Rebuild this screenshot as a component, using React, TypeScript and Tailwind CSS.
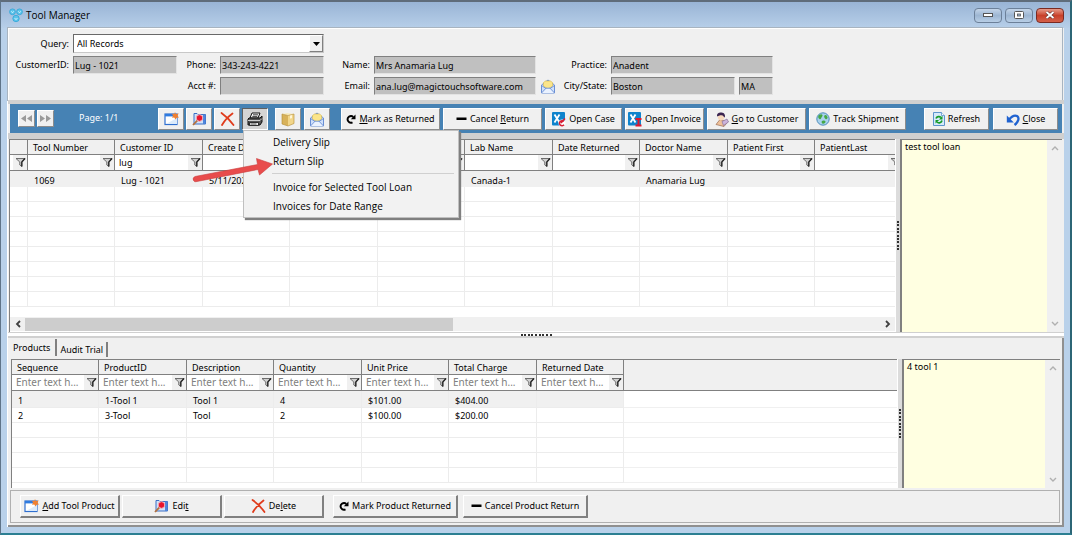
import React, { useState } from "react";

const fields = "h-[18px] w-full min-w-0 bg-[#c0c0c0] border border-t-[#808080] border-l-[#808080] border-r-[#e3e3e3] border-b-[#e3e3e3] pl-px outline-none";

const toolColumns = ["", "Tool Number", "Customer ID", "Create Date", "", "", "Lab Name", "Date Returned", "Doctor Name", "Patient First", "PatientLast"];
const toolRow = ["", "1069", "Lug - 1021", "5/11/2021", "", "", "Canada-1", "", "Anamaria Lug", "", ""];

const productColumns = ["Sequence", "ProductID", "Description", "Quantity", "Unit Price", "Total Charge", "Returned Date"];
const productRows = [
  ["1", "1-Tool 1", "Tool 1", "4", "$101.00", "$404.00", ""],
  ["2", "3-Tool", "Tool", "2", "$100.00", "$200.00", ""],
];

function FunnelIcon() {
  return (
    <svg width="11" height="11" viewBox="0 0 11 11">
      <path d="M1 1.5h9L6.8 5v4.500L4.800 8V5z" fill="#d0d0d0" stroke="#606060" strokeWidth=".9" />
      <path d="M10 1.5L6.8 5v4.500" fill="none" stroke="#222" strokeWidth="1.3" />
    </svg>
  );
}

function NewIcon() {
  return (
    <svg width="15" height="14" viewBox="0 0 15 14">
      <rect x="1" y="2" width="12" height="10.5" fill="#fff" stroke="#2f6fd0" strokeWidth="1.2" />
      <path d="M1 2h8v2.4H1z" fill="#2f7be0" />
      <path d="M2 12h11V6z" fill="#dcebfb" />
      <path d="M11 0l1 2.2 2.6-.9-1 2.4L15 5.5l-2.6.2-.8 1.9-1.4-2-2.2.2 1-2-1-2 2.3.3z" fill="#f08030" />
    </svg>
  );
}

function EditIcon() {
  return (
    <svg width="15" height="14" viewBox="0 0 15 14">
      <path d="M2 1.5h3l1 1h7.5v9.5H2z" fill="#cfe2fa" stroke="#3b6fc4" />
      <path d="M11 2.5h2.5V12H11z" fill="#4f86dc" />
      <circle cx="7.5" cy="6" r="3.3" fill="#e8142c" stroke="#f5b0b8" />
      <path d="M5.2 8.6L1 13" stroke="#b4703c" strokeWidth="1.8" />
    </svg>
  );
}

function DeleteIcon() {
  return (
    <svg width="15" height="14" viewBox="0 0 15 14">
      <path d="M1.5 1C5 3.5 10 8 13.5 13M12.5 1.5C8.5 4.5 4.5 8.5 2 13" fill="none" stroke="#e03c1c" strokeWidth="1.8" strokeLinecap="round" />
    </svg>
  );
}

function PrintIcon() {
  return (
    <svg width="18" height="15" viewBox="0 0 18 15">
      <path d="M6 1h8l-2 5H4z" fill="#fff" stroke="#111" />
      <path d="M7 2.8h5M6.3 4.4h5" stroke="#111" strokeWidth=".8" />
      <path d="M3 6h11l2-2v6l-2 3H2V7z" fill="#555" stroke="#111" />
      <path d="M2 8.5h12l2-2" fill="none" stroke="#ddd" strokeWidth=".9" />
      <path d="M3.5 10.5h9v3h-9z" fill="#eee" stroke="#111" strokeWidth=".8" />
      <path d="M4.5 12h6" stroke="#111" strokeWidth=".7" />
    </svg>
  );
}

function BoxIcon() {
  return (
    <svg width="14" height="15" viewBox="0 0 14 15">
      <path d="M1 2l6 1.5V14l-6-2z" fill="#d8b25a" />
      <path d="M7 3.5L13 2v9.5L7 14z" fill="#f2d68a" />
      <path d="M1 2l5-1 7 1-6 1.5z" fill="#f8ebbe" />
      <path d="M9 3l2-.5v4l-1-.6-1 1z" fill="#fff6d8" />
      <path d="M1 2l6 1.5L13 2v9.5L7 14l-6-2z" fill="none" stroke="#b48a30" strokeWidth=".6" />
    </svg>
  );
}

function MailIcon() {
  return (
    <svg width="16" height="15" viewBox="0 0 16 15">
      <path d="M1.5 6L8 1l6.5 5v8h-13z" fill="#cfe0fa" stroke="#6a8fd4" />
      <path d="M3.500 7V3.5L5.5 2h5l2 1.5V7L8 10z" fill="#fbe58a" stroke="#d8b848" strokeWidth=".6" />
      <path d="M1.500 14L6 9.2h4l4.5 4.8M1.5 6.5L6 9.5M14.5 6.5L10 9.5" fill="#eaf2ff" stroke="#6a8fd4" strokeWidth=".9" />
    </svg>
  );
}

function RedoIcon() {
  return (
    <svg width="10" height="10" viewBox="0 0 10 10">
      <path d="M6.5 8.3A3.3 3.3 0 1 1 7.3 3" fill="none" stroke="#000" strokeWidth="1.9" />
      <path d="M9.5.5v4.7H4.8z" fill="#000" />
    </svg>
  );
}

function MinusIcon() {
  return (
    <svg width="11" height="10" viewBox="0 0 11 10">
      <path d="M.5 3.5h10v2.5H.5z" fill="#000" />
    </svg>
  );
}

function CaseIcon({ invoice }: { invoice?: boolean }) {
  return (
    <svg width="14" height="15" viewBox="0 0 14 15">
      <rect x="0" y="0" width="13" height="13.5" rx="1" fill="#0f83cc" />
      <path d="M2.5 2.5l5 8M7.5 2.5l-5 8" stroke="#fff" strokeWidth="1.8" />
      {invoice ? (
        <path d="M7.5 7h6M10.5 7v6.5M7.5 13.5h6" stroke="#e0182c" strokeWidth="1.9" />
      ) : (
        <g>
          <circle cx="10" cy="11" r="3.5" fill="#fff" />
          <path d="M13 6.5L9 11M11.8 9.5A2.5 2.5 0 1 0 12 12.8" fill="none" stroke="#d81e34" strokeWidth="1.5" />
        </g>
      )}
    </svg>
  );
}

function CustomerIcon() {
  return (
    <svg width="14" height="15" viewBox="0 0 14 15">
      <path d="M1 12.5l4-5 8 2-4 5z" fill="#efc19a" stroke="#9a6a50" strokeWidth=".7" />
      <path d="M7 9.5l5-2.5 1.5 3-5 3.5z" fill="#cbb4dc" stroke="#7d6794" strokeWidth=".6" />
      <circle cx="6" cy="5" r="3.2" fill="#f7d9bd" />
      <path d="M2 4.5C1.5 1.5 4 0 6.5.5 9.5.8 10.5 3 9.8 5.5 8.5 5 8.5 3.5 6.5 3.3 4.5 3.3 3.5 4 2 4.5z" fill="#3a2450" />
    </svg>
  );
}

function GlobeIcon() {
  return (
    <svg width="14" height="14" viewBox="0 0 14 14">
      <circle cx="7" cy="7" r="6.2" fill="#a9d2ee" stroke="#4e8cba" />
      <path d="M3 3c1.5-1 3-1 3.5 0S5.5 5 5 6.5 3 7 2.5 6 2 4 3 3zM8.5 3.5c1-1 2.5 0 3 1.5S10.5 8 9.5 7 7.5 4.5 8.5 3.5zM6 9c1-1 3-.5 3.5.5S8 12 7 11.8 5 10 6 9z" fill="#45a845" />
    </svg>
  );
}

function RefreshIcon() {
  return (
    <svg width="12" height="14" viewBox="0 0 12 14">
      <path d="M.5.5h8l3 3v10H.5z" fill="#d6e9fb" stroke="#5c94cc" />
      <path d="M8.5.5v3h3" fill="#fff" stroke="#5c94cc" strokeWidth=".8" />
      <path d="M3 6.5A3 3 0 0 1 8 5.5M9 8.5A3 3 0 0 1 4 10" fill="none" stroke="#169c28" strokeWidth="1.7" />
      <path d="M9.5 3.8v3.6H6zM2.5 11.6V8h3.6z" fill="#169c28" />
    </svg>
  );
}

function UndoIcon() {
  return (
    <svg width="14" height="13" viewBox="0 0 14 13">
      <path d="M3 6.5C6 3 9 1.8 11.3 3.2 13.5 5 12.5 9 8.5 12" fill="none" stroke="#1f62d0" strokeWidth="2.3" />
      <path d="M.8 2.5v7h7z" fill="#1f62d0" />
    </svg>
  );
}

function LogoIcon() {
  return (
    <svg width="14" height="15" viewBox="0 0 14 15">
      <g fill="#5cc4ea" stroke="#2ea4d8" strokeWidth=".8">
        <circle cx="3.5" cy="3.8" r="2.9" />
        <circle cx="10.5" cy="3.8" r="2.9" />
        <circle cx="7" cy="10.5" r="3.2" />
      </g>
      <path d="M2.3 3.3l1.2 1.5 1.2-1.5M9.3 3.3l1.2 1.5 1.2-1.5M5.6 10l1.4 1.7L8.4 10" fill="none" stroke="#d8f4ff" strokeWidth=".9" />
    </svg>
  );
}

function Chevron({ dir, dark }: { dir: "up" | "down" | "left" | "right"; dark?: boolean }) {
  const paths = {
    up: "M1 6l3-3 3 3",
    down: "M1 2l3 3 3-3",
    left: "M6 1L3 4l3 3",
    right: "M2 1l3 3-3 3",
  };
  return (
    <svg width="8" height="8" viewBox="0 0 8 8">
      <path d={paths[dir]} fill="none" stroke={dark ? "#404040" : "#b0b0b0"} strokeWidth={dark ? 1.8 : 1.4} />
    </svg>
  );
}

function BarButton({ width, icon, children }: { width: string; icon: React.ReactNode; children: React.ReactNode }) {
  return (
    <button className={`${width} h-[22px] shrink-0 flex items-center justify-center gap-[3px] bg-[#f0f0f0] border border-t-white border-l-white border-r-[#8c8c8c] border-b-[#8c8c8c] whitespace-nowrap`}>
      {icon}
      <span>{children}</span>
    </button>
  );
}

function IconButton({ label, icon, pressed }: { label: string; icon: React.ReactNode; pressed?: boolean }) {
  return (
    <button
      aria-label={label}
      className={`w-[26px] h-[22px] flex items-center justify-center border ${
        pressed ? "bg-[#d4d4d4] border-t-[#606060] border-l-[#606060] border-r-white border-b-white" : "bg-[#f0f0f0] border-t-white border-l-white border-r-[#8c8c8c] border-b-[#8c8c8c]"
      }`}
    >
      {icon}
    </button>
  );
}

function FormButton({ width, icon, children }: { width: string; icon: React.ReactNode; children: React.ReactNode }) {
  return (
    <button className={`${width} h-[23px] flex items-center justify-center gap-[3px] bg-[#f0f0f0] border-t border-l border-r-2 border-b-2 border-t-white border-l-white border-r-[#808080] border-b-[#808080] whitespace-nowrap`}>
      {icon}
      <span>{children}</span>
    </button>
  );
}

function Notes({ width, text, label }: { width: string; text: string; label: string }) {
  return (
    <div className={`${width} shrink-0 flex border-t border-l-2 border-[#808080]`}>
      <textarea aria-label={label} defaultValue={text} className="flex-1 min-w-0 resize-none bg-[#ffffe1] px-[3px] py-px outline-none leading-3" />
      <div className="w-[15px] bg-[#f0f0f0] flex flex-col items-center justify-between py-1">
        <Chevron dir="up" />
        <Chevron dir="down" />
      </div>
    </div>
  );
}

function Splitter({ vertical }: { vertical?: boolean }) {
  return (
    <div className={vertical ? "w-[5px] shrink-0 flex items-center justify-center bg-[#dcdcdc] border-l border-white" : "h-[6px] flex items-center justify-center bg-white border-t border-b-2 border-[#d0d0d0]"}>
      <div className={vertical ? "h-[29px] flex flex-col justify-between" : "w-[31px] flex justify-between"}>
        {Array.from({ length: 9 }, (_, i) => (
          <span key={i} className="block size-[2px] bg-[#303030]" />
        ))}
      </div>
    </div>
  );
}

function FilterCell({ name, first, value, placeholder }: { name: string; first?: boolean; value?: string; placeholder?: string }) {
  return (
    <td className="p-0 border-r border-b border-[#808080]">
      <div className="flex h-[15px]">
        {!first && <input aria-label={"Filter " + name} defaultValue={value} placeholder={placeholder} className="flex-1 min-w-0 bg-white pl-1 outline-none placeholder:text-[10px] placeholder:text-[#808080]" />}
        <button aria-label={"Filter options " + name} className="w-[14px] ml-auto bg-[#f0f0f0] flex items-center justify-center">
          <FunnelIcon />
        </button>
      </div>
    </td>
  );
}

const headCell = "h-[15px] p-0 pl-[5px] text-left font-normal leading-[13px] whitespace-nowrap border-r border-b border-[#808080] bg-[#f0f0f0]";
const bodyCell = "p-0 pl-[6px] leading-3 whitespace-nowrap overflow-hidden border-r border-b border-[#ececec]";

function ToolGrid() {
  return (
    <div className="flex-1 min-w-0 flex flex-col bg-white border-t border-l border-[#808080] overflow-hidden">
      <table className="table-fixed border-separate border-spacing-0 w-[893px]">
        <colgroup>
          {toolColumns.map((c, i) => (
            <col key={i} className={i === 0 ? "w-[18px]" : i % 2 ? "w-[87px]" : "w-[88px]"} />
          ))}
        </colgroup>
        <thead>
          <tr>
            {toolColumns.map((c, i) => (
              <th key={i} className={headCell}>
                {c}
              </th>
            ))}
          </tr>
          <tr>
            {toolColumns.map((c, i) => (
              <FilterCell key={i} name={c} first={i === 0} value={c === "Customer ID" ? "lug" : ""} />
            ))}
          </tr>
        </thead>
        <tbody>
          <tr className="h-4 bg-[#f0f0f0]">
            {toolRow.map((v, i) => (
              <td key={i} className="p-0 pl-[6px] leading-3 pt-1 whitespace-nowrap overflow-hidden">
                {v}
              </td>
            ))}
          </tr>
          {Array.from({ length: 8 }, (_, r) => (
            <tr key={r} className="h-[15px]">
              {toolColumns.map((_, i) => (
                <td key={i} className={bodyCell} />
              ))}
            </tr>
          ))}
        </tbody>
      </table>
      <div className="h-[10px]" />
      <div className="h-[14px] mb-px bg-[#f0f0f0] flex items-center">
        <button aria-label="Scroll left" className="w-[15px] flex justify-center">
          <Chevron dir="left" dark />
        </button>
        <div className="flex-1 h-[13px]">
          <div className="w-1/2 h-full bg-[#cdcdcd]" />
        </div>
        <button aria-label="Scroll right" className="w-[15px] flex justify-center">
          <Chevron dir="right" dark />
        </button>
      </div>
    </div>
  );
}

function ProductGrid() {
  return (
    <div className="flex-1 min-w-0 bg-white border-t border-l border-[#808080] overflow-hidden">
      <table className="table-fixed border-separate border-spacing-0 w-full">
        <colgroup>
          {productColumns.map((c, i) => (
            <col key={c} className={i % 2 ? "w-[88px]" : "w-[87px]"} />
          ))}
          <col />
        </colgroup>
        <thead>
          <tr>
            {productColumns.map((c) => (
              <th key={c} className={headCell}>
                {c}
              </th>
            ))}
            <th className="bg-[#f0f0f0]" />
          </tr>
          <tr>
            {productColumns.map((c) => (
              <FilterCell key={c} name={c} placeholder="Enter text h..." />
            ))}
            <td className="bg-[#f0f0f0] border-b border-[#808080]" />
          </tr>
        </thead>
        <tbody>
          {productRows.map((row, r) => (
            <tr key={r} className={r === 0 ? "h-[17px]" : "h-[15px]"}>
              {row.map((v, i) => (
                <td key={i} className={bodyCell + (r === 0 ? " bg-[#f0f0f0] pt-1" : " pt-px")}>
                  {v}
                </td>
              ))}
              <td className="border-b border-[#f0f0f0]" />
            </tr>
          ))}
          {Array.from({ length: 4 }, (_, r) => (
            <tr key={r} className="h-[15px]">
              {productColumns.map((c) => (
                <td key={c} className={bodyCell} />
              ))}
              <td className="border-b border-[#f0f0f0]" />
            </tr>
          ))}
        </tbody>
      </table>
      <div className="h-[5px]" />
    </div>
  );
}

function PrintMenu() {
  const item = "block w-full h-[19px] pl-[29px] text-left hover:bg-[#d8e6f2]";
  return (
    <div className="absolute left-px top-[22px] z-10 w-[216px] pt-px pb-0.5 bg-[#f2f2f2] border border-[#c0c0c0] shadow-[2px_2px_1px_#808080] font-['Open_Sans',sans-serif] text-[10px]">
      <button className={item}>Delivery Slip</button>
      <button className={item}>Return Slip</button>
      <hr className="ml-7 mr-1 my-[3px] border-[#d0d0d0]" />
      <button className={item}>Invoice for Selected Tool Loan</button>
      <button className={item}>Invoices for Date Range</button>
      <svg className="absolute -left-[52px] top-[26px]" width="82" height="28" viewBox="0 0 82 28">
        <path d="M3 19.5Q0 21 1.500 23.500 2.500 25.500 5 24.500L66 12.500 67.500 18 80.500 7 64.500 1.500 65.500 7.500z" fill="#e84c4c" stroke="#c94040" strokeWidth=".6" />
      </svg>
    </div>
  );
}

export default function App() {
  const [menuOpen, setMenuOpen] = useState(true);

  return (
    <div className="min-h-screen flex flex-col bg-[#b9d1ea] border-t-2 border-l border-r-2 border-b-2 border-t-[#5f6c7a] border-l-[#5f7488] border-r-[#2c6676] border-b-[#2c7f92] font-['Noto_Sans',sans-serif] text-[9px] leading-3 text-black">
      <header className="h-[26px] flex items-center pl-2 pr-1.5 gap-[3px] bg-linear-to-b from-[#99b4d5] to-[#b7cfe9]">
        <LogoIcon />
        <h1 className="flex-1 font-['Open_Sans',sans-serif] text-[10px] text-black">Tool Manager</h1>
        <button aria-label="Minimize" className="w-[28px] h-[15px] flex items-center justify-center rounded-sm border border-[#6c8099] bg-linear-to-b from-[#c3d4e8] via-[#9db6d2] to-[#b8cee6]">
          <span className="block w-[10px] h-1 bg-white border border-[#555]" />
        </button>
        <button aria-label="Maximize" className="w-[28px] h-[15px] flex items-center justify-center rounded-sm border border-[#6c8099] bg-linear-to-b from-[#c3d4e8] via-[#9db6d2] to-[#b8cee6]">
          <svg width="10" height="8" viewBox="0 0 10 8">
            <rect x=".5" y=".5" width="9" height="7" rx="1" fill="#fff" stroke="#555" />
            <rect x="3.5" y="3" width="3" height="2" fill="#9db6d2" stroke="#555" strokeWidth=".8" />
          </svg>
        </button>
        <button aria-label="Close window" className="w-[28px] h-[15px] flex items-center justify-center rounded-sm border border-[#7a2a22] bg-linear-to-b from-[#e59a8a] via-[#c8402a] to-[#d4604a]">
          <svg width="10" height="8" viewBox="0 0 10 8">
            <path d="M1.5 1l7 6M8.5 1l-7 6" stroke="#5a2a28" strokeWidth="3" />
            <path d="M1.5 1l7 6M8.5 1l-7 6" stroke="#fff" strokeWidth="1.9" />
          </svg>
        </button>
      </header>

      <main className="flex-1 flex flex-col ml-1.5 mr-1.5 mb-1.5 bg-[#f0f0f0] border-l border-white">
        <form className="mr-0.5 pl-[4px] pt-[5px] pb-[5px] border-t border-l border-white grid grid-cols-[56px_104px_35px_104px_42px_162px_16px_47px_124px_34px] gap-x-1 gap-y-[3px] items-center ring-1 ring-[#a8b4c0]">
          <label htmlFor="query" className="text-right">
            Query:
          </label>
          <div className="col-span-3 relative">
            <select id="query" className="appearance-none block w-full h-[19px] pl-[3px] bg-white border border-t-[#696969] border-l-[#696969] border-r-[#c8c8c8] border-b-[#c8c8c8] outline-none">
              <option>All Records</option>
            </select>
            <span className="absolute right-px top-px w-[14px] h-[17px] flex items-center justify-center bg-[#f0f0f0] border border-t-white border-l-white border-r-[#808080] border-b-[#808080] pointer-events-none">
              <svg width="7" height="4" viewBox="0 0 7 4">
                <path d="M0 0h7L3.5 4z" fill="#000" />
              </svg>
            </span>
          </div>
          <div className="col-span-6" />

          <label htmlFor="customer" className="text-right">
            CustomerID:
          </label>
          <input id="customer" readOnly value="Lug - 1021" className={fields} />
          <label htmlFor="phone" className="text-right">
            Phone:
          </label>
          <input id="phone" readOnly value="343-243-4221" className={fields} />
          <label htmlFor="name" className="text-right">
            Name:
          </label>
          <input id="name" readOnly value="Mrs Anamaria Lug" className={fields} />
          <label htmlFor="practice" className="col-span-2 text-right">
            Practice:
          </label>
          <div className="col-span-2">
            <input id="practice" readOnly value="Anadent" className={fields} />
          </div>

          <label htmlFor="acct" className="col-span-3 text-right">
            Acct #:
          </label>
          <input id="acct" readOnly value="" className={fields} />
          <label htmlFor="email" className="text-right">
            Email:
          </label>
          <input id="email" readOnly value="ana.lug@magictouchsoftware.com" className={fields} />
          <button type="button" aria-label="Send email">
            <MailIcon />
          </button>
          <label htmlFor="city" className="text-right">
            City/State:
          </label>
          <input id="city" readOnly value="Boston" className={fields} />
          <input aria-label="State" readOnly value="MA" className={fields} />
        </form>

        <div className="border-t-4 border-b-[6px] border-[#d0d0d0]">
          <div className="ml-0.5 mr-0.5 h-[29px] pt-1 pl-2 pr-1 flex items-start bg-[#4682b4]">
            <div className="flex gap-0.5 pt-0.5">
              {["Previous page", "Next page"].map((label, i) => (
                <button key={label} aria-label={label} className="size-[17px] flex items-center justify-center bg-[#f0f0f0] border border-t-white border-l-white border-r-[#8c8c8c] border-b-[#8c8c8c]">
                  <svg width="11" height="7" viewBox="0 0 11 7" fill="#9a9a9a">
                    <path d={i === 0 ? "M5 0v7L0 3.5zM11 0v7L6 3.5z" : "M0 0v7l5-3.5zM6 0v7l5-3.5z"} />
                  </svg>
                </button>
              ))}
            </div>
            <div className="ml-[25px] w-[79px] pt-1 text-white">Page: 1/1</div>
            <div className="flex gap-0.5">
              <IconButton label="New" icon={<NewIcon />} />
              <IconButton label="Edit" icon={<EditIcon />} />
              <IconButton label="Delete" icon={<DeleteIcon />} />
              <div className="relative" onClick={() => setMenuOpen(!menuOpen)}>
                <IconButton label="Print" icon={<PrintIcon />} pressed={menuOpen} />
                {menuOpen && <PrintMenu />}
              </div>
            </div>
            <div className="flex gap-[3px] ml-[7px]">
              <IconButton label="Package" icon={<BoxIcon />} />
              <IconButton label="Email" icon={<MailIcon />} />
            </div>
            <div className="flex gap-[3px] ml-[11px]">
              <BarButton width="w-[99px]" icon={<RedoIcon />}>
                <u>M</u>ark as Returned
              </BarButton>
              <BarButton width="w-[99px]" icon={<MinusIcon />}>
                Cancel <u>R</u>eturn
              </BarButton>
              <BarButton width="w-[77px]" icon={<CaseIcon />}>
                Open Case
              </BarButton>
              <BarButton width="w-[79px]" icon={<CaseIcon invoice />}>
                Open Invoice
              </BarButton>
              <BarButton width="w-[99px]" icon={<CustomerIcon />}>
                <u>G</u>o to Customer
              </BarButton>
              <BarButton width="w-[97px]" icon={<GlobeIcon />}>
                Track Shipment
              </BarButton>
            </div>
            <div className="flex gap-1 ml-auto">
              <BarButton width="w-[65px]" icon={<RefreshIcon />}>
                Refresh
              </BarButton>
              <BarButton width="w-[65px]" icon={<UndoIcon />}>
                <u>C</u>lose
              </BarButton>
            </div>
          </div>
        </div>

        <section className="flex ml-px mr-[2px]">
          <ToolGrid />
          <Splitter vertical />
          <Notes width="w-[162px]" label="Tool notes" text="test tool loan" />
        </section>

        <Splitter />

        <section className="flex-1 flex flex-col border-r-2 border-b-2 border-[#909090]">
          <div role="tablist" className="flex h-[21px] pt-px">
            <button role="tab" aria-selected="true" className="h-[17px] pl-[5px] pr-[5px] border-r-2 border-[#808080]">
              Products
            </button>
            <button role="tab" aria-selected="false" className="h-[15px] mt-[3px] px-[3px] border-r-2 border-[#808080]">
              Audit Trial
            </button>
          </div>
          <div className="flex ml-[3px] mr-[2px]">
            <ProductGrid />
            <Splitter vertical />
            <Notes width="w-[158px]" label="Product notes" text="4 tool 1" />
          </div>
          <div className="mt-0.5 ml-0.5 mr-[2px] h-[33px] flex gap-1 pl-[9px] pt-1 border border-[#b0b0b0]">
            <div className="flex gap-0.5">
              <FormButton width="w-[100px]" icon={<NewIcon />}>
                <u>A</u>dd Tool Product
              </FormButton>
              <FormButton width="w-[100px]" icon={<EditIcon />}>
                Edi<u>t</u>
              </FormButton>
              <FormButton width="w-[100px]" icon={<DeleteIcon />}>
                De<u>l</u>ete
              </FormButton>
            </div>
            <div className="flex gap-[5px] ml-[5px]">
              <FormButton width="w-[125px]" icon={<RedoIcon />}>
                Mark Product Returned
              </FormButton>
              <FormButton width="w-[125px]" icon={<MinusIcon />}>
                Cancel Product Return
              </FormButton>
            </div>
          </div>
        </section>
      </main>
    </div>
  );
}
